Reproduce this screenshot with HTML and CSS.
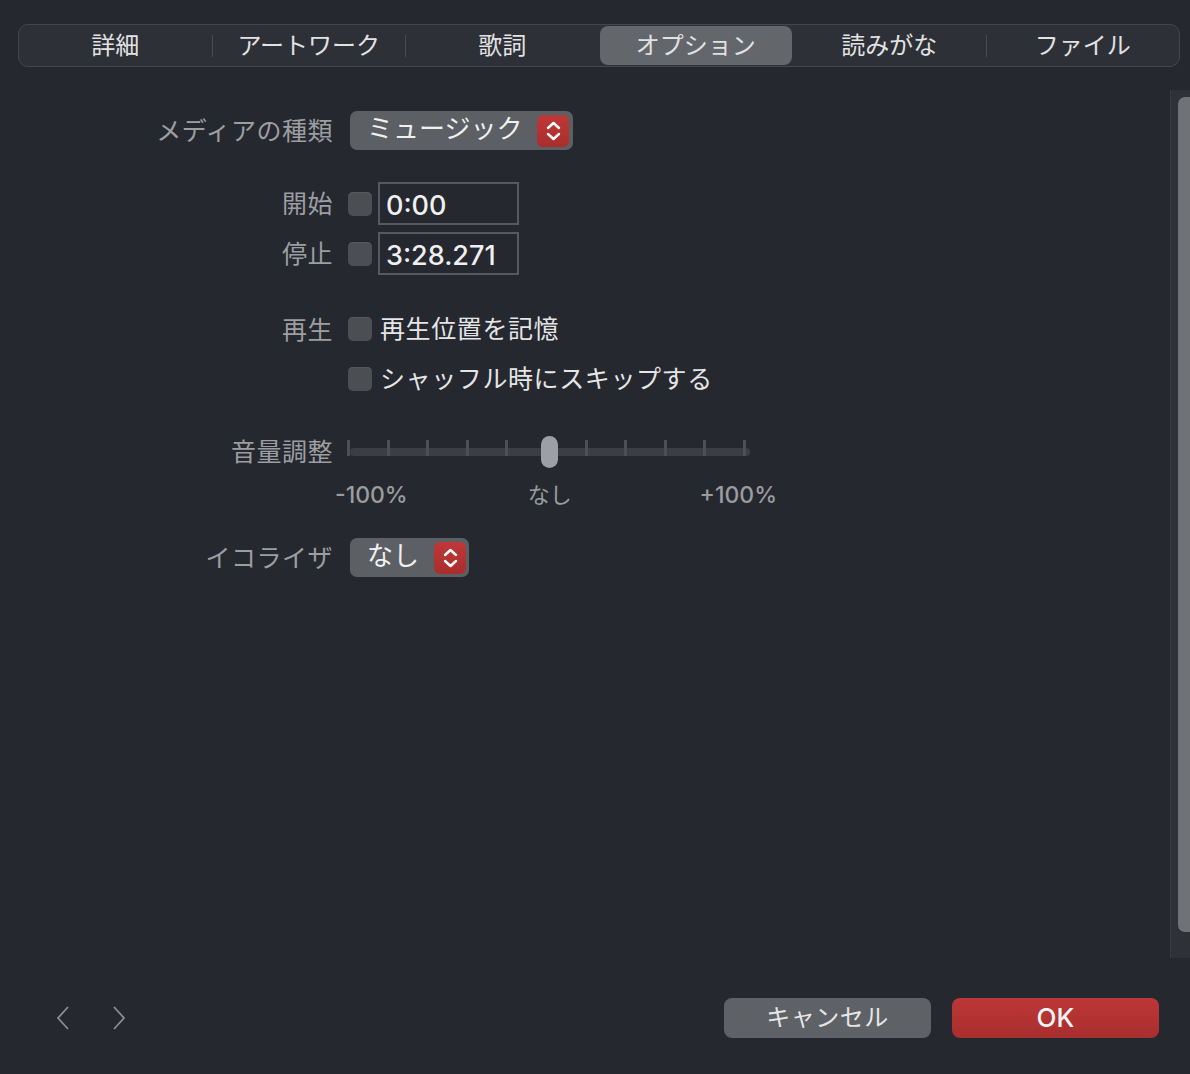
FILE: index.html
```html
<!DOCTYPE html>
<html lang="ja">

<head>
    <meta charset="UTF-8">
    <meta name="viewport" content="width=device-width, initial-scale=1.0">
    <title>オプション</title>
    <link rel="stylesheet" href="styles.css">
</head>

<body>

    <div class="window">
        <!-- Tab bar -->
        <div class="tabs">
            <div class="tab">詳細</div>
            <span class="divider"></span>
            <div class="tab">アートワーク</div>
            <span class="divider"></span>
            <div class="tab">歌詞</div>
            <span class="divider hidden"></span>
            <div class="tab selected">オプション</div>
            <span class="divider hidden"></span>
            <div class="tab">読みがな</div>
            <span class="divider"></span>
            <div class="tab">ファイル</div>
        </div>

        <div class="content">
            <div class="form">
                <div class="row row-media">
                    <div class="label">メディアの種類</div>
                    <div class="popup popup-media">
                        <span>ミュージック</span>
                        <span class="stepper">
                            <svg width="32" height="32" viewBox="0 0 32 32">
                                <polyline points="11,13 16.5,8 22,13" />
                                <polyline points="11,19 16.5,24 22,19" />
                            </svg>
                        </span>
                    </div>
                </div>

                <div class="row row-start">
                    <div class="label">開始</div>
                    <span class="checkbox"></span>
                    <div class="field">0:00</div>
                </div>
                <div class="row row-stop">
                    <div class="label">停止</div>
                    <span class="checkbox"></span>
                    <div class="field">3:28.271</div>
                </div>

                <div class="row row-check row-play">
                    <div class="label">再生</div>
                    <span class="checkbox"></span>
                    <span class="check-text">再生位置を記憶</span>
                </div>
                <div class="row row-check row-shuffle">
                    <div class="label"></div>
                    <span class="checkbox"></span>
                    <span class="check-text">シャッフル時にスキップする</span>
                </div>

                <div class="row row-volume">
                    <div class="label">音量調整</div>
                    <div class="slider">
                        <div class="track"></div>
                        <div class="ticks">
                            <i></i><i></i><i></i><i></i><i></i><i></i><i></i><i></i><i></i><i></i><i></i>
                        </div>
                        <div class="thumb"></div>
                    </div>
                </div>
                <div class="scale">
                    <span>-100%</span>
                    <span class="scale-mid">なし</span>
                    <span>+100%</span>
                </div>

                <div class="row row-eq">
                    <div class="label">イコライザ</div>
                    <div class="popup popup-eq">
                        <span>なし</span>
                        <span class="stepper">
                            <svg width="32" height="32" viewBox="0 0 32 32">
                                <polyline points="11,13 16.5,8 22,13" />
                                <polyline points="11,19 16.5,24 22,19" />
                            </svg>
                        </span>
                    </div>
                </div>
            </div>

            <!-- Scroll bar -->
            <div class="scrollbar">
                <div class="scroll-thumb"></div>
            </div>
        </div>

        <div class="footer">
            <div class="arrows">
                <svg width="14" height="24" viewBox="0 0 14 24">
                    <polyline points="12,1 2,12 12,23" />
                </svg>
                <svg width="14" height="24" viewBox="0 0 14 24">
                    <polyline points="2,1 12,12 2,23" />
                </svg>
            </div>
            <div class="buttons">
                <a href="#" class="button cancel">キャンセル</a>
                <a href="#" class="button ok">OK</a>
            </div>
        </div>
    </div>

</body>

</html>
```

FILE: styles.css
```css
* {
    margin: 0;
    padding: 0;
    box-sizing: border-box;
}

body {
    font-family: Inter, "Noto Sans CJK JP", sans-serif;
    background-color: #25282f;
    color: #e4e4e5;
    overflow: hidden;
}

.window {
    height: 1074px;
    padding: 24px 0 0 18px;
    display: flex;
    flex-direction: column;
}

/* Tabs */
.tabs {
    display: flex;
    align-items: stretch;
    height: 43px;
    margin-right: 10px;
    border: 1px solid #43464c;
    border-radius: 10px;
    background-color: #2d3037;
}

.tab {
    flex: 1;
    display: flex;
    align-items: center;
    justify-content: center;
    font-size: 24px;
    line-height: 1;
    color: #e2e2e3;
}

.tab.selected {
    margin: 1px 0;
    border-radius: 8px;
    background-color: #63666b;
}

.divider {
    width: 1px;
    height: 22px;
    align-self: center;
    background-color: #494c52;
}

.divider.hidden {
    background-color: transparent;
}

/* Content */
.content {
    flex: 1;
    display: flex;
    margin-top: 23px;
}

.form {
    flex: 1;
    padding-top: 21px;
}

.row {
    display: flex;
    align-items: center;
}

.label {
    width: 315px;
    margin-right: 15px;
    padding-top: 2px;
    text-align: right;
    font-size: 25px;
    line-height: 1;
    letter-spacing: 0.5px;
    color: #9c9ea1;
}

.row-media {
    height: 39px;
}

.row-start {
    height: 43px;
    margin-top: 32px;
}

.row-stop {
    height: 43px;
    margin-top: 7px;
}

.row-play {
    height: 34px;
    margin-top: 37px;
}

.row-shuffle {
    height: 34px;
    margin-top: 16px;
}

.row-volume {
    height: 34px;
    margin-top: 38px;
}

.row-eq {
    height: 39px;
    margin-top: 32px;
}

/* Pop-up buttons */
.popup {
    height: 39px;
    margin-left: 2px;
    display: flex;
    align-items: center;
    justify-content: space-between;
    padding-left: 17px;
    border-radius: 7px;
    background-color: #5c5f64;
    font-size: 26px;
    line-height: 1;
    color: #f0f0f0;
}

.popup-media {
    width: 223px;
    padding-right: 4px;
}

.popup-eq {
    width: 119px;
    padding-right: 3px;
}

.popup span:first-child {
    padding-bottom: 3px;
}

.stepper {
    width: 32px;
    height: 32px;
    border-radius: 6px;
    background: linear-gradient(#bf3838, #a92d2d);
}

.stepper svg {
    display: block;
}

.stepper polyline {
    fill: none;
    stroke: #ffffff;
    stroke-width: 2.4;
    stroke-linecap: round;
    stroke-linejoin: round;
}

/* Checkboxes and fields */
.checkbox {
    width: 24px;
    height: 24px;
    border-radius: 5px;
    background-color: #4b4e53;
    box-shadow: inset 0 1px 0 #55585d;
}

.field {
    width: 141px;
    height: 43px;
    margin-left: 6px;
    padding: 4px 0 0 6px;
    display: flex;
    align-items: center;
    border: 2px solid #56595e;
    font-size: 27px;
    font-weight: 500;
    line-height: 1;
    color: #efefef;
}

.check-text {
    margin-left: 8px;
    font-size: 25px;
    line-height: 1;
    letter-spacing: 0.6px;
    color: #e5e5e6;
}

/* Volume slider */
.slider {
    position: relative;
    width: 402px;
    height: 34px;
}

.track {
    position: absolute;
    left: 2px;
    right: 0;
    top: 14px;
    height: 8px;
    border-radius: 4px;
    background-color: #3b3e43;
}

.ticks {
    position: absolute;
    left: -1px;
    right: 4px;
    top: 6px;
    height: 16px;
    display: flex;
    justify-content: space-between;
}

.ticks i {
    width: 3px;
    background-color: #4c4f54;
}

.thumb {
    position: absolute;
    left: 193px;
    top: 2px;
    width: 17px;
    height: 32px;
    border-radius: 9px;
    background-color: #9c9fa3;
}

.scale {
    width: 759px;
    height: 22px;
    margin-top: 16px;
    padding-left: 317px;
    display: flex;
    justify-content: space-between;
    align-items: center;
    font-size: 23px;
    font-weight: 500;
    line-height: 1;
    color: #9a9c9f;
}

.scale-mid {
    margin-right: 8px;
    font-size: 22px;
    font-weight: 400;
}

/* Scroll bar */
.scrollbar {
    width: 20px;
    padding: 7px 0 26px 7px;
    border-left: 1px solid #393c41;
    background-color: #2e3136;
}

.scroll-thumb {
    height: 100%;
    border-radius: 7px 0 0 7px;
    background-color: #6f7276;
}

/* Footer */
.footer {
    height: 116px;
    padding: 40px 31px 0 38px;
    display: flex;
    justify-content: space-between;
    align-items: flex-start;
}

.arrows {
    height: 40px;
    display: flex;
    align-items: center;
    gap: 42px;
}

.arrows svg {
    display: block;
}

.arrows polyline {
    fill: none;
    stroke: #8b8d91;
    stroke-width: 1.8;
}

.buttons {
    display: flex;
    gap: 21px;
}

.button {
    width: 207px;
    height: 40px;
    display: flex;
    align-items: center;
    justify-content: center;
    border-radius: 8px;
    text-decoration: none;
    line-height: 1;
}

.cancel {
    background-color: #5e6166;
    color: #e6e6e6;
    font-size: 24px;
    letter-spacing: 0.5px;
}

.ok {
    background: linear-gradient(#bd3737, #a92e2e);
    color: #f4f4f4;
    font-size: 26px;
    font-weight: 500;
}
```
